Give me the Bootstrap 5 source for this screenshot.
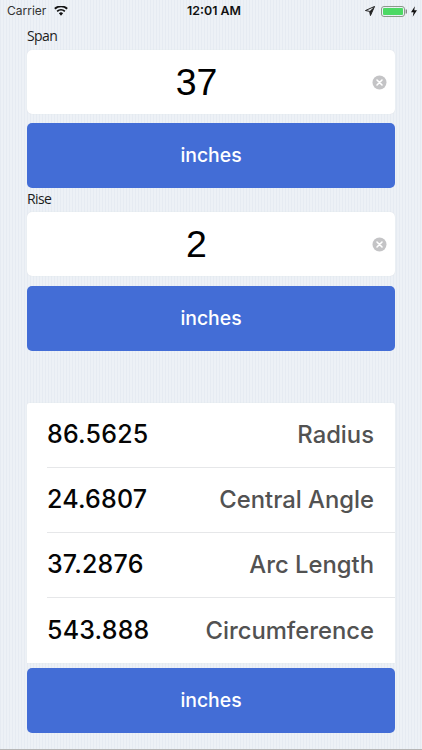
<!DOCTYPE html>
<html lang="en">
<head>
<meta charset="utf-8">
<title>Arc calculator</title>
<link href="https://cdn.jsdelivr.net/npm/bootstrap@5.3.0/dist/css/bootstrap.min.css" rel="stylesheet">
<style>
html,body{height:750px;overflow:hidden}
body{width:422px;font-family:"Inter","Liberation Sans",sans-serif;color:#000;
  background-color:#e9eef5;
  background-image:repeating-linear-gradient(90deg,#e6ebf2 0,#e6ebf2 1px,#edf1f6 1px,#edf1f6 3px);}
.stat-bar{height:22px;margin-bottom:6px;padding:0 5px 0 7px;color:#111}
.stat-left{width:132px}
.stat-right{width:128px}
.stat-carrier{color:#333;font-size:12px}
.stat-time{font-weight:600;font-size:12.4px}
.stat-batt{margin-left:6px;margin-right:4px}
.main-col{padding:0 27px 0 27px}
.field-label{font-family:"Open Sans","Noto Sans",sans-serif;font-size:14px;letter-spacing:-.6px;line-height:16px;color:#1b1b1b}
.span-label{margin-bottom:6px}
.rise-label{margin-top:3px;margin-bottom:5px}
.num-box{height:64px;background:#fff;border-radius:5px;box-shadow:0 0 1px #d5d9df;margin-bottom:9px;font-family:"Liberation Sans",sans-serif;font-size:37.5px;padding-right:8px}
.num-box-rise{margin-bottom:10px}
.num-val{margin-right:6px}
.clear-ico{width:15px;height:15px;flex:none}
.unit-btn{display:block;width:100%;height:65px;background:#436dd6;border:0;border-radius:5px;color:#fff;font-size:19.4px;font-weight:500;padding:0}
.unit-btn:hover,.unit-btn:active{background:#436dd6!important;color:#fff!important}
.result-panel{margin-top:52px;background:#fff;height:260px;box-shadow:0 0 1px #d5d9df;padding-left:20px;border-radius:2px 2px 0 0}
.res-row{height:65px;padding-right:21px;border-bottom:1px solid #e6e7e9}
.res-row:last-child{border-bottom:0}
.res-num{font-size:25px;font-weight:500;color:#050505;letter-spacing:.2px}
.res-name{font-size:23.8px;font-weight:500;color:#525252}
.bottom-btn{margin-top:5px}
.base-line{position:fixed;left:0;right:0;bottom:0;height:1px;background:#b5b5b5}
</style>
</head>
<body>
<div class="stat-bar d-flex align-items-center justify-content-between">
  <div class="stat-left d-flex align-items-center gap-2">
    <span class="stat-carrier">Carrier</span>
    <svg width="14" height="10" viewBox="0 0 15 11"><path d="M7.5 10.6 5.2 8a3.4 3.4 0 0 1 4.6 0Z M3.9 6.6 2.6 5.1a7.4 7.4 0 0 1 9.8 0L11.1 6.6a5.4 5.4 0 0 0-7.2 0Z M1.4 3.8 0 2.3a11.2 11.2 0 0 1 15 0l-1.4 1.5a9.2 9.2 0 0 0-12.2 0Z" fill="#111"/></svg>
  </div>
  <div class="stat-time">12:01 AM</div>
  <div class="stat-right d-flex align-items-center justify-content-end">
    <svg width="10" height="10" viewBox="0 0 11 11"><path d="M10.5.5 .5 5l4.6.9L6 10.5Z" fill="none" stroke="#222" stroke-width="1.1" stroke-linejoin="round"/><path d="M10.5.5 5.1 5.9 6 10.5Z" fill="#222"/></svg>
    <svg width="26" height="11" viewBox="0 0 26 11" class="stat-batt"><rect x=".5" y=".5" width="23" height="10" rx="2.5" fill="none" stroke="#8a9a8a"/><rect x="2" y="2" width="20" height="7" rx="1" fill="#4cd964"/><rect x="24.6" y="3.5" width="1.4" height="4" fill="#888"/></svg>
    <svg width="6" height="11" viewBox="0 0 7 12"><path d="M4.5 0 0 7h3l-1 5 5-7.5H3.8Z" fill="#111"/></svg>
  </div>
</div>
<div class="main-col">
  <div class="field-label span-label">Span</div>
  <div class="num-box d-flex align-items-center">
    <div class="num-val flex-grow-1 text-center">37</div>
    <svg class="clear-ico" viewBox="0 0 15 15"><circle cx="7.5" cy="7.5" r="7" fill="#c4c4c6"/><path d="M5 5l5 5M10 5l-5 5" stroke="#fff" stroke-width="1.6" stroke-linecap="round"/></svg>
  </div>
  <button type="button" class="btn unit-btn">inches</button>
  <div class="field-label rise-label">Rise</div>
  <div class="num-box num-box-rise d-flex align-items-center">
    <div class="num-val flex-grow-1 text-center">2</div>
    <svg class="clear-ico" viewBox="0 0 15 15"><circle cx="7.5" cy="7.5" r="7" fill="#c4c4c6"/><path d="M5 5l5 5M10 5l-5 5" stroke="#fff" stroke-width="1.6" stroke-linecap="round"/></svg>
  </div>
  <button type="button" class="btn unit-btn">inches</button>
  <div class="result-panel">
    <div class="res-row d-flex align-items-center justify-content-between"><span class="res-num">86.5625</span><span class="res-name">Radius</span></div>
    <div class="res-row d-flex align-items-center justify-content-between"><span class="res-num">24.6807</span><span class="res-name">Central Angle</span></div>
    <div class="res-row d-flex align-items-center justify-content-between"><span class="res-num">37.2876</span><span class="res-name">Arc Length</span></div>
    <div class="res-row d-flex align-items-center justify-content-between"><span class="res-num">543.888</span><span class="res-name">Circumference</span></div>
  </div>
  <button type="button" class="btn unit-btn bottom-btn">inches</button>
</div>
<div class="base-line"></div>
</body>
</html>
